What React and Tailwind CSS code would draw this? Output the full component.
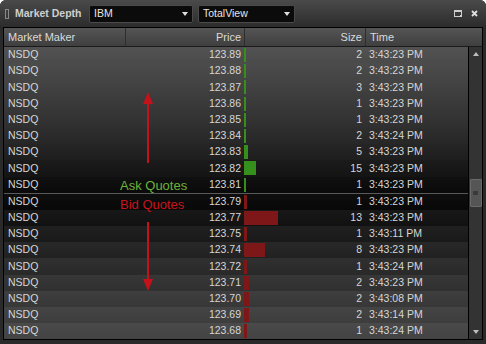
import React from 'react';

const ASK = [
  ['123.89', 2, '3:43:23 PM', 'from-[#525252] to-[#4a4a4a]'],
  ['123.88', 2, '3:43:23 PM', 'from-[#4c4c4c] to-[#444444]'],
  ['123.87', 3, '3:43:23 PM', 'from-[#454545] to-[#3d3d3d]'],
  ['123.86', 1, '3:43:23 PM', 'from-[#3d3d3d] to-[#363636]'],
  ['123.85', 1, '3:43:23 PM', 'from-[#363636] to-[#2f2f2f]'],
  ['123.84', 2, '3:43:24 PM', 'from-[#2e2e2e] to-[#272727]'],
  ['123.83', 5, '3:43:23 PM', 'from-[#252525] to-[#1e1e1e]'],
  ['123.82', 15, '3:43:23 PM', 'from-[#1b1b1b] to-[#141414]'],
  ['123.81', 1, '3:43:23 PM', 'from-[#101010] to-[#0a0a0a]'],
];

const BID = [
  ['123.79', 1, '3:43:23 PM', 'from-[#0e0e0e] to-[#080808]'],
  ['123.77', 13, '3:43:23 PM', 'from-[#181818] to-[#111111]'],
  ['123.75', 1, '3:43:11 PM', 'from-[#202020] to-[#191919]'],
  ['123.74', 8, '3:43:23 PM', 'from-[#282828] to-[#212121]'],
  ['123.72', 1, '3:43:24 PM', 'from-[#303030] to-[#292929]'],
  ['123.71', 2, '3:43:23 PM', 'from-[#373737] to-[#303030]'],
  ['123.70', 2, '3:43:08 PM', 'from-[#3e3e3e] to-[#373737]'],
  ['123.69', 2, '3:43:14 PM', 'from-[#444444] to-[#3d3d3d]'],
  ['123.68', 1, '3:43:24 PM', 'from-[#4a4a4a] to-[#434343]'],
];

const Caret = () => (
  <svg width="6" height="4" viewBox="0 0 6 4">
    <path d="M0 0 H6 L3 4 Z" fill="#e0e0e0" />
  </svg>
);

const Dropdown = ({ label, width }) => (
  <div
    className={`${width} h-[18px] bg-[#0b0b0b] border border-[#4a4a4a] rounded-[2px] flex items-center justify-between pl-[4px] pr-[4px] text-[10.5px] text-[#e6e6e6]`}
  >
    <span>{label}</span>
    <Caret />
  </div>
);

const Row = ({ price, size, time, bg, side }) => {
  // bar length scales differently for each side, as in the original
  const barW = side === 'ask' ? Math.max(2, Math.round(size * 0.8)) : Math.max(3, Math.round(size * 2.6));
  return (
    <div className={`h-[16.2px] flex items-center bg-linear-to-b ${bg} text-[10.5px] text-[#d6d6d6]`}>
      <div className="w-[121px] pl-[4px]">NSDQ</div>
      <div className="w-[119px] text-right pr-[3px]">{price}</div>
      <div className="w-[121px] h-full flex items-center">
        <div
          className={`h-[14px] ${side === 'ask' ? 'bg-[#358f1c]' : 'bg-[#7e1717]'}`}
          style={{ width: barW }}
        />
        <div className="flex-1 text-right pr-[3px]">{size}</div>
      </div>
      <div className="flex-1 pl-[4px]">{time}</div>
    </div>
  );
};

const App = () => {
  return (
    <div className="w-[486px] h-[344px] bg-[#2a2a2a] rounded-t-[6px] overflow-hidden flex flex-col font-['Liberation_Sans',Arial,sans-serif]">
      {/* title bar */}
      <div className="h-[27px] flex items-center bg-linear-to-b from-[#4a4a4a] to-[#2c2c2c] pl-[5px] pr-[8px]">
        <div className="w-[4px] h-[10px] border border-[#8a8a8a]" />
        <div className="ml-[6px] w-[74px] text-[10.5px] font-bold text-[#cfcfcf]">Market Depth</div>
        <Dropdown label="IBM" width="w-[104px]" />
        <div className="w-[5px]" />
        <Dropdown label="TotalView" width="w-[97px]" />
        <div className="flex-1" />
        <svg width="8" height="7" viewBox="0 0 8 7" className="mr-[9px]">
          <rect x="0.5" y="0.5" width="7" height="6" fill="none" stroke="#cfcfcf" />
          <rect x="0.5" y="0.5" width="7" height="1.5" fill="#cfcfcf" />
          <path d="M5 7 L8 4" stroke="#cfcfcf" />
        </svg>
        <svg width="7" height="7" viewBox="0 0 7 7">
          <path d="M1 1 L6 6 M6 1 L1 6" stroke="#e0e0e0" strokeWidth="1.8" />
        </svg>
      </div>

      {/* table */}
      <div className="mx-[3px] border border-black flex flex-col">
        <div className="h-[19px] flex items-center bg-linear-to-b from-[#555555] to-[#3f3f3f] text-[11px] text-[#dadada] border-b border-[#1a1a1a]">
          <div className="w-[121px] pl-[4px] h-full flex items-center">Market Maker</div>
          <div className="w-[119px] h-full flex items-center justify-end pr-[3px] border-l border-[#2e2e2e]">Price</div>
          <div className="w-[121px] h-full flex items-center justify-end pr-[3px] border-l border-[#2e2e2e]">Size</div>
          <div className="flex-1 h-full flex items-center pl-[4px] border-l border-[#2e2e2e]">Time</div>
        </div>
        <div className="flex">
          <div className="w-[465px] relative border-r border-black">
            {ASK.map(([p, s, t, bg]) => (
              <Row key={p} price={p} size={s} time={t} bg={bg} side="ask" />
            ))}
            <div className="h-px bg-[#5a5a5a]" />
            {BID.map(([p, s, t, bg]) => (
              <Row key={p} price={p} size={s} time={t} bg={bg} side="bid" />
            ))}

            {/* annotations */}
            <svg width="12" height="72" viewBox="0 0 12 72" className="absolute left-[138px] top-[45px]">
              <path d="M6 0 L11 12 L1 12 Z" fill="#c3121a" />
              <rect x="5" y="11" width="2" height="60" fill="#c3121a" />
            </svg>
            <svg width="12" height="70" viewBox="0 0 12 70" className="absolute left-[138px] top-[175px]">
              <rect x="5" y="0" width="2" height="58" fill="#c3121a" />
              <path d="M6 69 L11 57 L1 57 Z" fill="#c3121a" />
            </svg>
            <div className="absolute left-[116px] top-[129px] text-[13px] text-[#6db33a]">Ask Quotes</div>
            <div className="absolute left-[116px] top-[148px] text-[13px] text-[#c8141c]">Bid Quotes</div>
          </div>
          {/* scrollbar */}
          <div className="flex-1 bg-[#333333] flex flex-col items-center">
            <svg width="6" height="4" viewBox="0 0 6 4" className="mt-[5px]">
              <path d="M0 4 H6 L3 0 Z" fill="#bdbdbd" />
            </svg>
            <div className="mt-[123px] w-[12px] h-[28px] bg-[#555555] border border-[#6a6a6a] rounded-[1px] flex items-center justify-center">
              <div className="w-[5px] h-[4px] bg-[#3a3a3a]" />
            </div>
            <div className="flex-1" />
            <svg width="6" height="4" viewBox="0 0 6 4" className="mb-[5px]">
              <path d="M0 0 H6 L3 4 Z" fill="#bdbdbd" />
            </svg>
          </div>
        </div>
      </div>
    </div>
  );
};

export default App;
